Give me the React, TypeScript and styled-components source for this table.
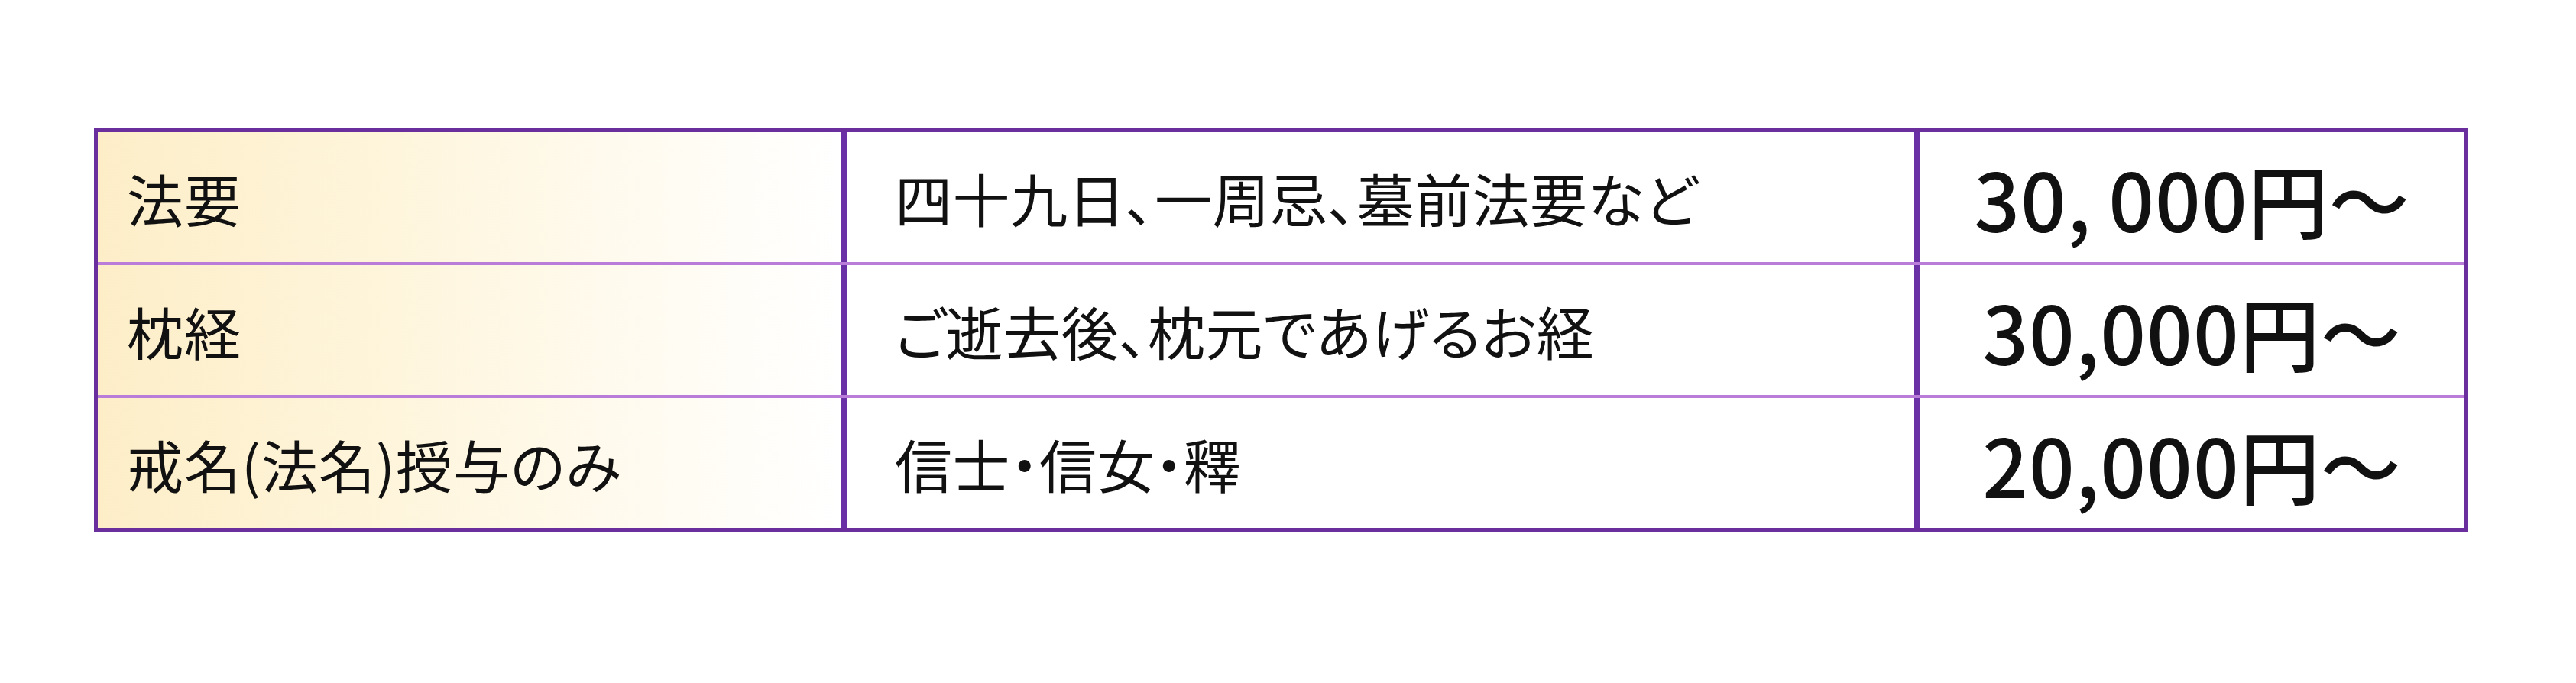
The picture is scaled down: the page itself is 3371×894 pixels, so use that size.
import styled, { createGlobalStyle } from 'styled-components';

const GlobalStyle = createGlobalStyle`
  html, body {
    margin: 0;
    padding: 0;
    background: #ffffff;
  }
  body {
    font-family: "Noto Sans CJK JP", "Noto Sans", sans-serif;
    color: #111;
  }
`;

const Page = styled.div`
  width: 3371px;
  height: 894px;
  box-sizing: border-box;
  padding: 168px 0 0 123px;
`;

const PriceTable = styled.div`
  width: 3107px;
  box-sizing: border-box;
  border: 5px solid #6b2f9d;
  display: flex;
  flex-direction: column;
`;

const Row = styled.div<{ $first?: boolean }>`
  display: grid;
  grid-template-columns: 972px 1405px 1fr;
  height: 170px;
  border-top: ${(p) => (p.$first ? 'none' : '4px solid #b97cd8')};
`;

const LabelCell = styled.div`
  display: flex;
  align-items: center;
  padding-left: 38px;
  font-size: 74px;
  letter-spacing: 1px;
  font-feature-settings: "palt";
  background: linear-gradient(to right, #fdeec8 0%, #fef5dc 40%, #fffcf4 80%, #ffffff 100%);
`;

const DescCell = styled.div`
  display: flex;
  align-items: center;
  padding-left: 63px;
  font-size: 75px;
  letter-spacing: 0.5px;
  font-feature-settings: "palt";
  border-left: 8px solid #6a30a6;
`;

const PriceCell = styled.div`
  display: flex;
  align-items: center;
  justify-content: center;
  font-size: 105px;
  font-weight: 500;
  letter-spacing: 1px;
  border-left: 7px solid #6a30a6;
`;

const rows = [
  { label: '法要', desc: '四十九日、一周忌、墓前法要など', price: '30,\u2009000円～' },
  { label: '枕経', desc: 'ご逝去後、枕元であげるお経', price: '30,000円～' },
  { label: '戒名(法名)授与のみ', desc: '信士・信女・釋', price: '20,000円～' },
];

export default function App() {
  return (
    <>
      <GlobalStyle />
      <Page>
        <PriceTable>
          {rows.map((r, i) => (
            <Row key={r.label} $first={i === 0}>
              <LabelCell>{r.label}</LabelCell>
              <DescCell>{r.desc}</DescCell>
              <PriceCell>{r.price}</PriceCell>
            </Row>
          ))}
        </PriceTable>
      </Page>
    </>
  );
}
